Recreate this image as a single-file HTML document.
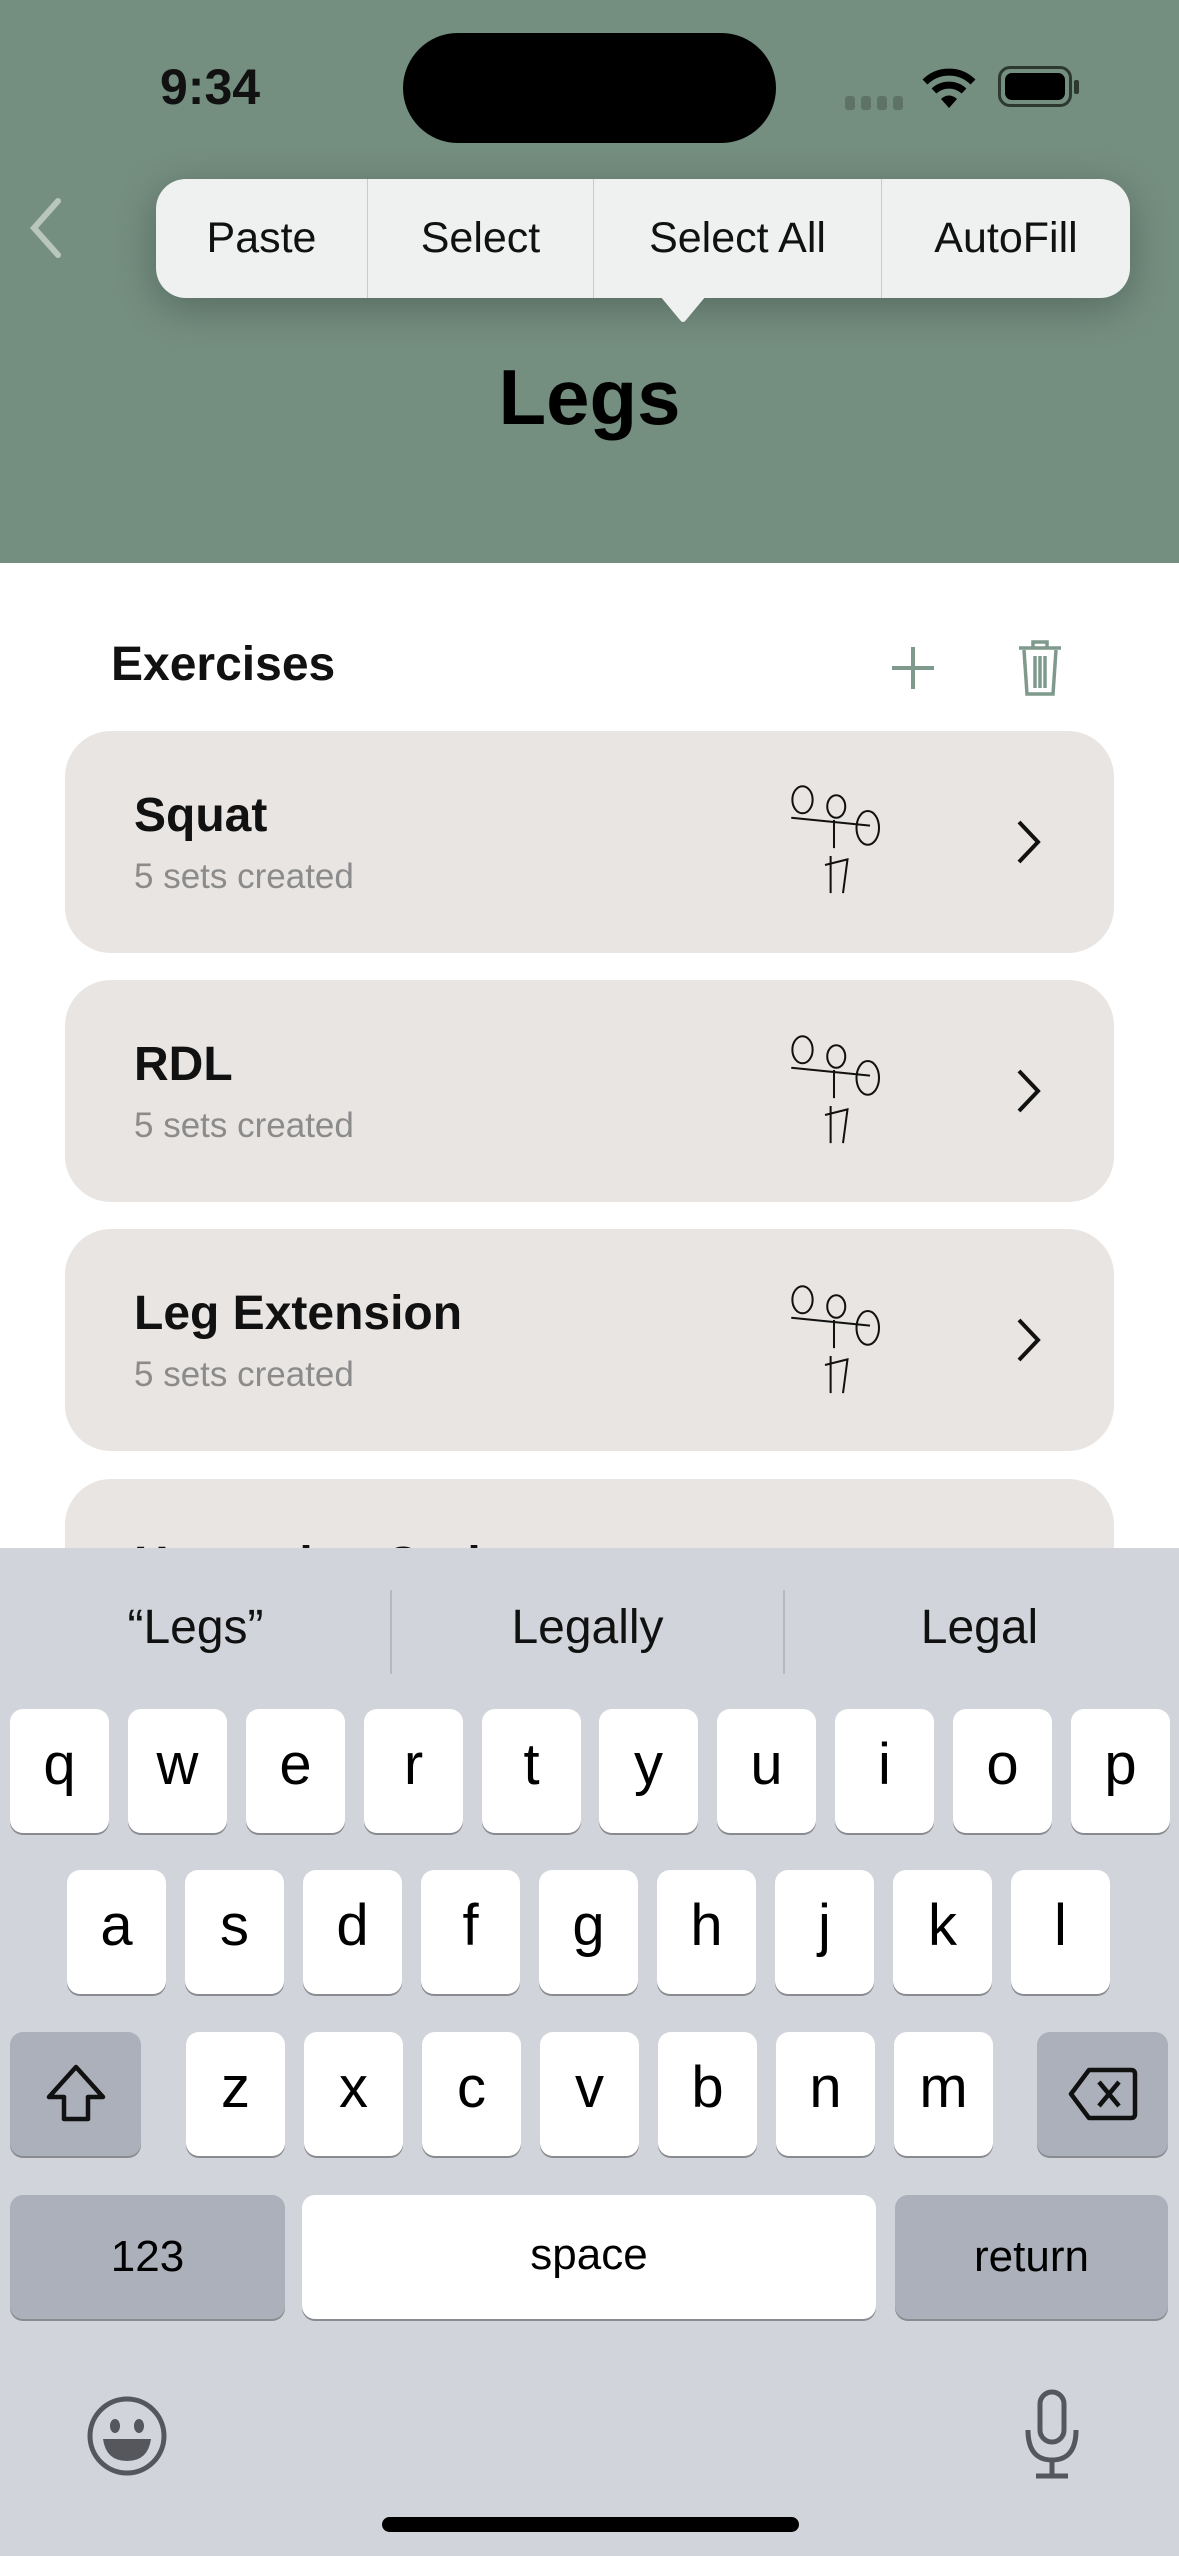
<!DOCTYPE html>
<html><head><meta charset="utf-8"><style>
*{margin:0;padding:0;box-sizing:border-box}
body{width:1179px;height:2556px;position:relative;overflow:hidden;background:#fff;font-family:"Liberation Sans",sans-serif}
.a{position:absolute}
.hdr{left:0;top:0;width:1179px;height:563px;background:#748e80}
.menu{left:156px;top:179px;width:974px;height:119px;background:#eef1ef;border-radius:30px;box-shadow:0 10px 40px rgba(0,0,0,.25);display:flex}
.menu div{height:119px;line-height:119px;text-align:center;font-size:43px;color:#111;border-right:1.5px solid #c8ccc9}
.menu div:last-child{border-right:none}
.card{left:65px;width:1049px;height:222px;background:#e8e5e2;border-radius:46px}
.ct{position:absolute;left:69px;top:57px;font-size:48px;font-weight:bold;color:#111}
.cs{position:absolute;left:69px;top:126px;font-size:35px;color:#8b8b8b}
.kb{left:0;top:1548px;width:1179px;height:1008px;background:#d1d4da}
.k{position:absolute;width:99px;height:124px;background:#fff;border-radius:13px;box-shadow:0 2px 0 #898b90;text-align:center;font-size:58px;line-height:112px;color:#000}
.g{background:#abb0ba}
.sg{position:absolute;top:52px;font-size:48px;color:#111;text-align:center;width:391px}
</style></head><body>
<div class="a hdr"></div>
<div class="a" style="left:160px;top:58px;font-size:50px;font-weight:bold;color:#111">9:34</div>
<div class="a" style="left:403px;top:33px;width:373px;height:110px;background:#000;border-radius:55px"></div>
<div class="a" style="left:845px;top:96px;display:flex;gap:6px"><span style="width:10px;height:14px;background:#5e7266;border-radius:3px"></span><span style="width:10px;height:14px;background:#5e7266;border-radius:3px"></span><span style="width:10px;height:14px;background:#5e7266;border-radius:3px"></span><span style="width:10px;height:14px;background:#5e7266;border-radius:3px"></span></div>
<svg class="a" style="left:922px;top:66px" width="54" height="44" viewBox="0 0 54 44"><path d="M3 16 A34 34 0 0 1 51 16" stroke="#000" stroke-width="7" fill="none"/><path d="M12 25 A22 22 0 0 1 42 25" stroke="#000" stroke-width="7" fill="none"/><path d="M27 42 L19 33 A11 11 0 0 1 35 33 Z" fill="#000"/></svg>
<div class="a" style="left:998px;top:66px;width:74px;height:41px;border:3px solid #2d3830;border-radius:12px;padding:4px"><div style="width:100%;height:100%;background:#000;border-radius:7px"></div></div>
<div class="a" style="left:1074px;top:80px;width:5px;height:14px;background:#2d3830;border-radius:2px"></div>
<svg class="a" style="left:26px;top:197px" width="40" height="62"><path d="M32 4 L8 31 L32 58" stroke="#b8c6be" stroke-width="6" fill="none" stroke-linecap="round"/></svg>
<div class="a menu"><div style="width:212px">Paste</div><div style="width:226px">Select</div><div style="width:288px">Select All</div><div style="flex:1">AutoFill</div></div>
<svg class="a" style="left:660px;top:296px" width="46" height="28"><path d="M0 0 L46 0 L26 24 Q23 28 20 24 Z" fill="#eef1ef"/></svg>
<div class="a" style="left:0;width:1179px;top:352px;text-align:center;font-size:78px;font-weight:bold;color:#000">Legs</div>
<div class="a" style="left:111px;top:637px;font-size:48px;font-weight:bold;color:#111">Exercises</div>
<svg class="a" style="left:890px;top:645px" width="46" height="46"><path d="M23 2V44M2 23H44" stroke="#7f9a8c" stroke-width="4"/></svg>
<svg class="a" style="left:1015px;top:638px" width="50" height="60" viewBox="0 0 50 60"><path d="M4 10H46M18 10V4H32V10M9 12L12 56H38L41 12M20 18V50M25 18V50M30 18V50" stroke="#7f9a8c" stroke-width="3.5" fill="none"/></svg>
<div class="a card" style="top:731px"><div class="ct">Squat</div><div class="cs">5 sets created</div></div>
<div class="a card" style="top:980px"><div class="ct">RDL</div><div class="cs">5 sets created</div></div>
<div class="a card" style="top:1229px"><div class="ct">Leg Extension</div><div class="cs">5 sets created</div></div>
<div class="a card" style="top:1479px"><div class="ct" style="top:58px">Hamstring Curl</div></div>
<svg class="a" style="left:780px;top:780px" width="135" height="125" viewBox="0 0 120 100" fill="none" stroke="#111" stroke-width="1.8"><ellipse cx="20" cy="12" rx="9" ry="12"/><ellipse cx="50" cy="18" rx="8" ry="10"/><ellipse cx="78" cy="37" rx="10" ry="15"/><path d="M10 28 L80 35 M48 30 L48 55 M40 70 L60 65 L56 95 M45 62 V95"/></svg>
<svg class="a" style="left:780px;top:1030px" width="135" height="125" viewBox="0 0 120 100" fill="none" stroke="#111" stroke-width="1.8"><ellipse cx="20" cy="12" rx="9" ry="12"/><ellipse cx="50" cy="18" rx="8" ry="10"/><ellipse cx="78" cy="37" rx="10" ry="15"/><path d="M10 28 L80 35 M48 30 L48 55 M40 70 L60 65 L56 95 M45 62 V95"/></svg>
<svg class="a" style="left:780px;top:1280px" width="135" height="125" viewBox="0 0 120 100" fill="none" stroke="#111" stroke-width="1.8"><ellipse cx="20" cy="12" rx="9" ry="12"/><ellipse cx="50" cy="18" rx="8" ry="10"/><ellipse cx="78" cy="37" rx="10" ry="15"/><path d="M10 28 L80 35 M48 30 L48 55 M40 70 L60 65 L56 95 M45 62 V95"/></svg>
<svg class="a" style="left:1013px;top:818px" width="30" height="48"><path d="M6 4L25 24L6 44" stroke="#111" stroke-width="4" fill="none"/></svg>
<svg class="a" style="left:1013px;top:1067px" width="30" height="48"><path d="M6 4L25 24L6 44" stroke="#111" stroke-width="4" fill="none"/></svg>
<svg class="a" style="left:1013px;top:1316px" width="30" height="48"><path d="M6 4L25 24L6 44" stroke="#111" stroke-width="4" fill="none"/></svg>
<div class="a kb">
<div class="sg" style="left:0">“Legs”</div><div class="sg" style="left:392px">Legally</div><div class="sg" style="left:784px">Legal</div>
<div class="a" style="left:390px;top:42px;width:2px;height:84px;background:#b6b9bf"></div>
<div class="a" style="left:783px;top:42px;width:2px;height:84px;background:#b6b9bf"></div>
</div>
<div class="k" style="left:10px;top:1709px">q</div><div class="k" style="left:128px;top:1709px">w</div><div class="k" style="left:246px;top:1709px">e</div><div class="k" style="left:364px;top:1709px">r</div><div class="k" style="left:482px;top:1709px">t</div><div class="k" style="left:599px;top:1709px">y</div><div class="k" style="left:717px;top:1709px">u</div><div class="k" style="left:835px;top:1709px">i</div><div class="k" style="left:953px;top:1709px">o</div><div class="k" style="left:1071px;top:1709px">p</div>
<div class="k" style="left:67px;top:1870px">a</div><div class="k" style="left:185px;top:1870px">s</div><div class="k" style="left:303px;top:1870px">d</div><div class="k" style="left:421px;top:1870px">f</div><div class="k" style="left:539px;top:1870px">g</div><div class="k" style="left:657px;top:1870px">h</div><div class="k" style="left:775px;top:1870px">j</div><div class="k" style="left:893px;top:1870px">k</div><div class="k" style="left:1011px;top:1870px">l</div>
<div class="k g" style="left:10px;top:2032px;width:131px"><svg width="70" height="70" viewBox="0 0 70 70" style="margin-top:27px"><path d="M35 8 L62 38 H47 V60 H23 V38 H8 Z" stroke="#111" stroke-width="4.5" fill="none" stroke-linejoin="round"/></svg></div>
<div class="k" style="left:186px;top:2032px">z</div><div class="k" style="left:304px;top:2032px">x</div><div class="k" style="left:422px;top:2032px">c</div><div class="k" style="left:540px;top:2032px">v</div><div class="k" style="left:658px;top:2032px">b</div><div class="k" style="left:776px;top:2032px">n</div><div class="k" style="left:894px;top:2032px">m</div>
<div class="k g" style="left:1037px;top:2032px;width:131px"><svg width="72" height="60" viewBox="0 0 72 60" style="margin-top:32px"><path d="M22 6 H64 Q68 6 68 10 V50 Q68 54 64 54 H22 L4 30 Z" stroke="#111" stroke-width="4.5" fill="none" stroke-linejoin="round"/><path d="M32 18 L52 42 M52 18 L32 42" stroke="#111" stroke-width="4.5"/></svg></div>
<div class="k g" style="left:10px;top:2195px;width:275px;font-size:44px;line-height:124px">123</div>
<div class="k" style="left:302px;top:2195px;width:574px;font-size:44px;line-height:120px">space</div>
<div class="k g" style="left:895px;top:2195px;width:273px;font-size:44px;line-height:124px">return</div>
<svg class="a" style="left:86px;top:2395px" width="82" height="82" viewBox="0 0 82 82"><circle cx="41" cy="41" r="37" stroke="#55575c" stroke-width="5" fill="none"/><ellipse cx="29" cy="31" rx="5" ry="7" fill="#55575c"/><ellipse cx="53" cy="31" rx="5" ry="7" fill="#55575c"/><path d="M17 44 H65 Q62 66 41 66 Q20 66 17 44Z" fill="#55575c"/></svg>
<svg class="a" style="left:1022px;top:2388px" width="60" height="96" viewBox="0 0 60 96"><rect x="18" y="4" width="24" height="50" rx="12" stroke="#55575c" stroke-width="5" fill="none"/><path d="M6 42 Q6 72 30 72 Q54 72 54 42 M30 72 V88 M14 88 H46" stroke="#55575c" stroke-width="5" fill="none"/></svg>
<div class="a" style="left:382px;top:2517px;width:417px;height:15px;background:#000;border-radius:8px"></div>
</body></html>
